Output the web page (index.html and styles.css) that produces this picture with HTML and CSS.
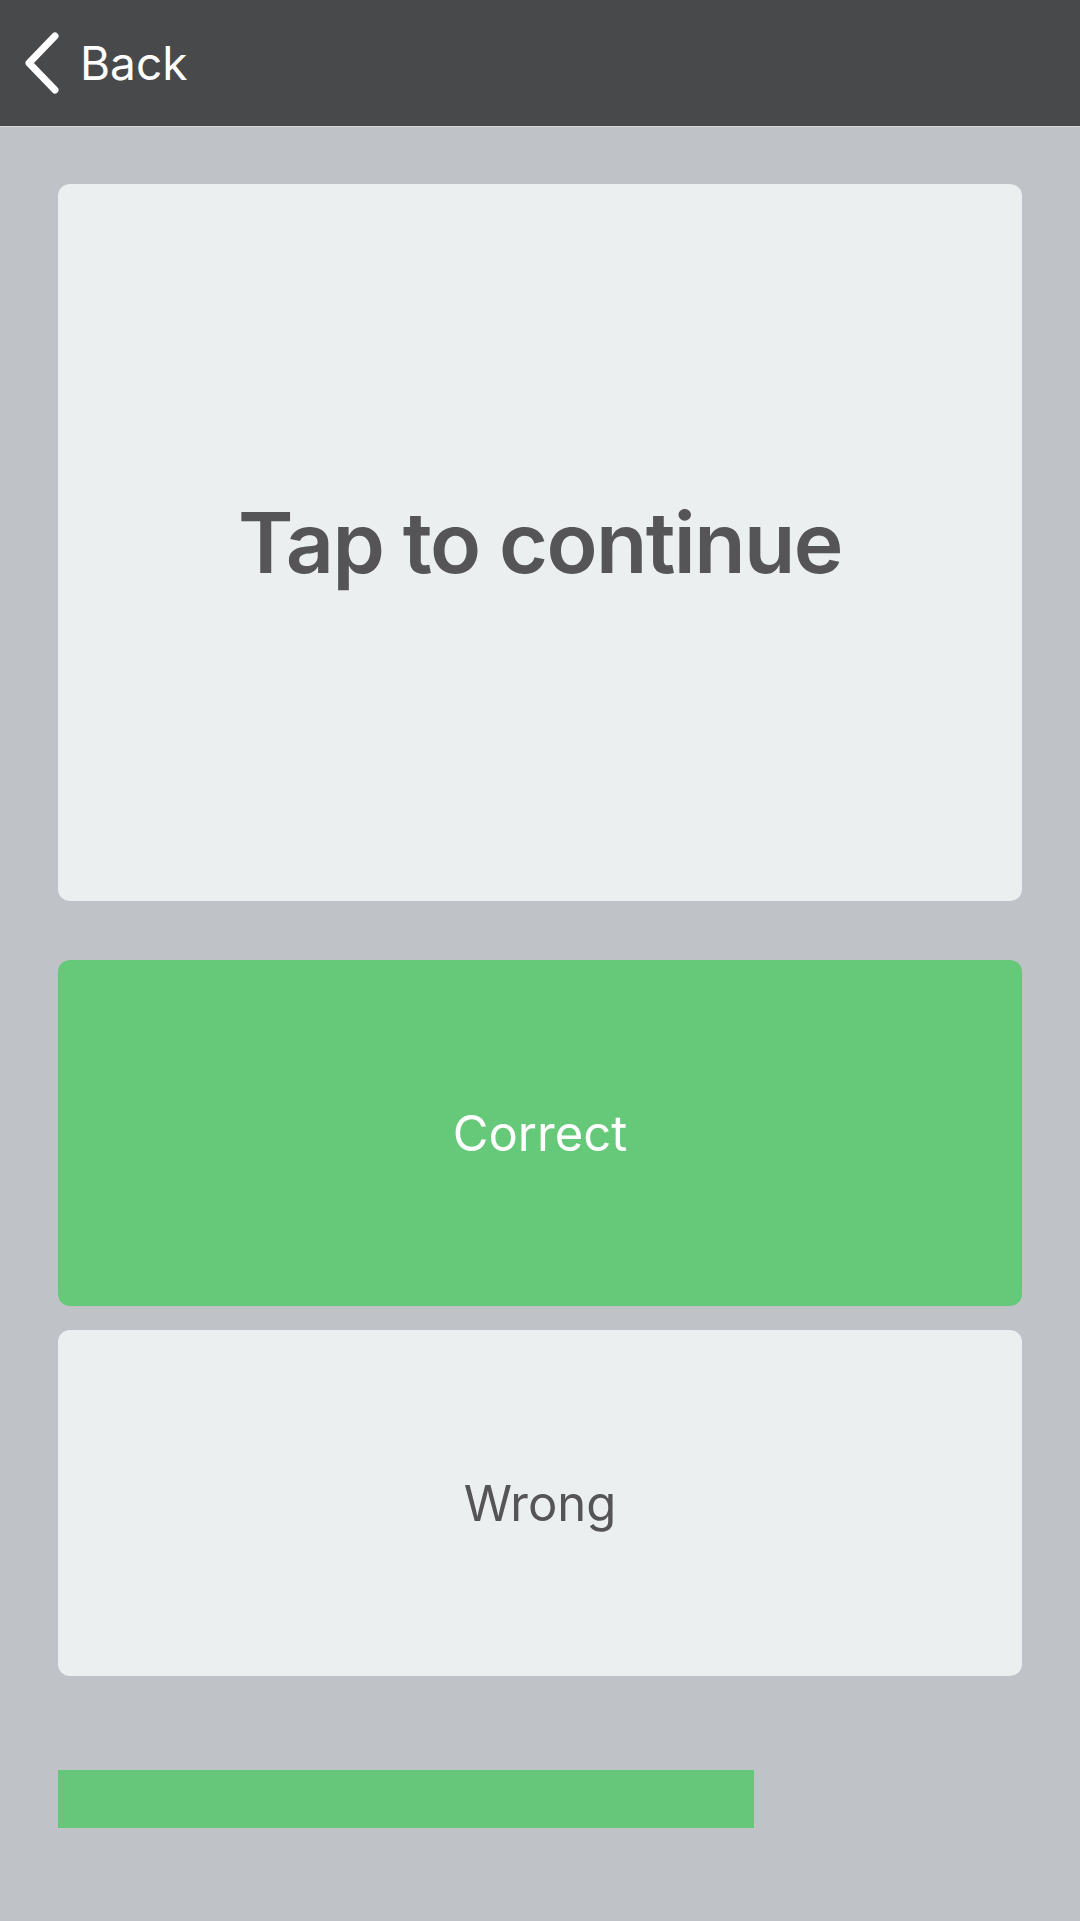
FILE: index.html
```html
<!DOCTYPE html>
<html>
<head>
<meta charset="utf-8">
<link rel="stylesheet" href="styles.css">
</head>
<body>
<header class="topbar">
  <div class="back">
    <svg class="chev" width="36" height="62" viewBox="0 0 36 62"><path d="M31 4 L5 31 L31 58" fill="none" stroke="#fff" stroke-width="7" stroke-linecap="round" stroke-linejoin="round"/></svg>
    <span class="back-label">Back</span>
  </div>
</header>
<main class="content">
  <div class="card prompt">Tap to continue</div>
  <div class="answers">
    <div class="card btn correct">Correct</div>
    <div class="card btn wrong">Wrong</div>
  </div>
  <div class="progress"><div class="fill" style="width:696px"></div></div>
</main>
</body>
</html>
```
FILE: styles.css
```css
html, body {
  margin: 0;
  padding: 0;
}
body {
  background: #bfc2c6;
  font-family: Inter, "Noto Sans", "Liberation Sans", sans-serif;
  width: 1080px;
  height: 1921px;
  overflow: hidden;
}
.topbar {
  height: 126px;
  background: #48494b;
  border-bottom: 1px solid #d6d8db;
  display: flex;
  align-items: center;
}
.back {
  display: flex;
  align-items: center;
  margin-left: 24px;
}
.chev {
  display: block;
}
.back-label {
  color: #fff;
  font-size: 46px;
  font-weight: 400;
  margin-left: 20px;
}
.content {
  padding: 57px 58px 0 58px;
  display: flex;
  flex-direction: column;
}
.card {
  background: #ebeff0;
  border-radius: 12px;
  display: flex;
  align-items: center;
  justify-content: center;
  color: #555557;
}
.prompt {
  height: 717px;
  font-size: 84px;
  font-weight: 600;
  letter-spacing: -1.6px;
}
.answers {
  margin-top: 59px;
  display: flex;
  flex-direction: column;
  gap: 24px;
}
.btn {
  height: 346px;
  font-size: 49px;
  font-weight: 400;
}
.correct {
  background: #66c97a;
  color: #fff;
}
.wrong {
  height: 346px;
}
.progress {
  margin-top: 94px;
  height: 58px;
}
.fill {
  height: 100%;
  background: #66c77a;
}
```
